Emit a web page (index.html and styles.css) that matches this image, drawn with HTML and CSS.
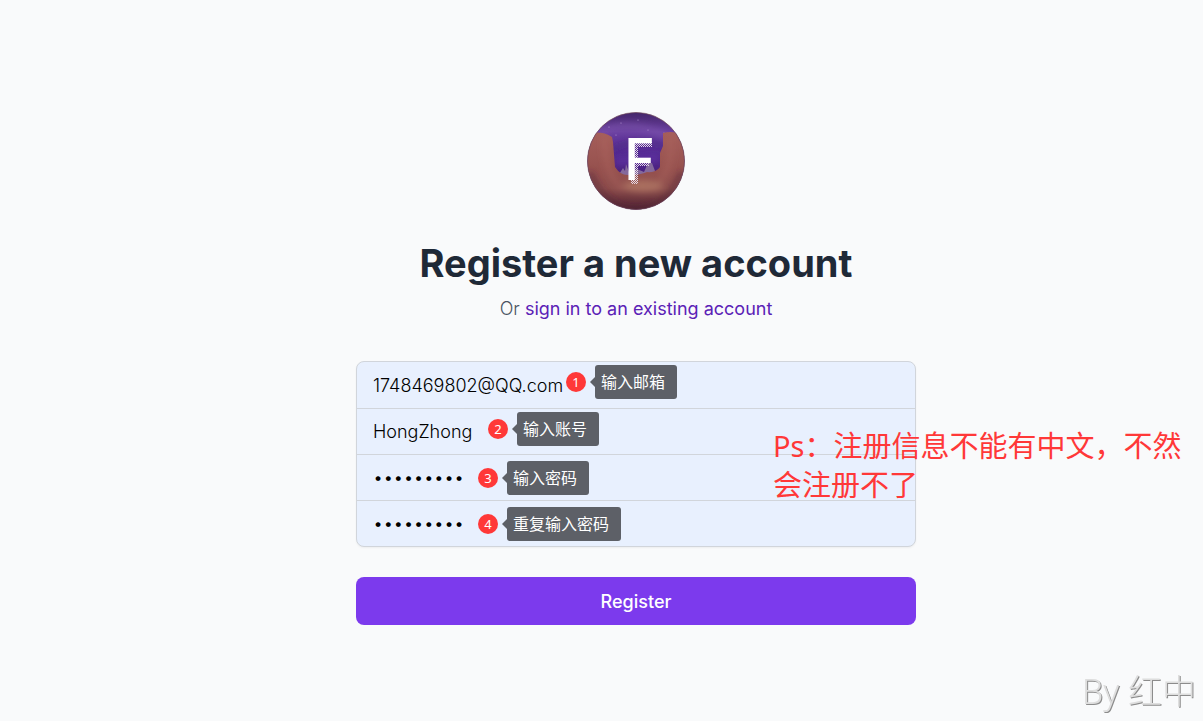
FILE: index.html
```html
<!DOCTYPE html>
<html lang="en">
<head>
    <meta charset="UTF-8" />
    <meta name="viewport" content="width=device-width, initial-scale=1.0" />
    <title>Register a new account</title>
    <link rel="stylesheet" href="styles.css">
</head>

<body>
    <main class="page">
        <div class="register">
            <svg class="logo" viewBox="0 0 98 98" role="img" aria-label="Logo">
                <defs>
                    <clipPath id="round"><circle cx="49" cy="49" r="48.5" /></clipPath>
                    <linearGradient id="sky" x1="0" y1="0" x2="0" y2="1">
                        <stop offset="0" stop-color="#432568" />
                        <stop offset="0.2" stop-color="#6a3fa0" />
                        <stop offset="0.42" stop-color="#532a92" />
                        <stop offset="0.6" stop-color="#4a2280" />
                    </linearGradient>
                    <linearGradient id="rock" x1="0" y1="0" x2="0" y2="1">
                        <stop offset="0" stop-color="#a55e5a" />
                        <stop offset="0.45" stop-color="#97524f" />
                        <stop offset="0.72" stop-color="#8d4d4c" />
                        <stop offset="1" stop-color="#4c2030" />
                    </linearGradient>
                    <pattern id="dots" width="2" height="2" patternUnits="userSpaceOnUse">
                        <rect width="1" height="1" fill="#e4d8e8" />
                        <rect x="1" y="1" width="1" height="1" fill="#e4d8e8" />
                    </pattern>
                    <filter id="soft" x="-50%" y="-50%" width="200%" height="200%"><feGaussianBlur stdDeviation="3" /></filter>
                </defs>
                <g clip-path="url(#round)">
                    <rect width="98" height="98" fill="url(#sky)" />
                    <g filter="url(#soft)">
                        <path d="M8 22 Q40 6 80 24" stroke="#8058b0" stroke-width="6" fill="none" opacity="0.6" />
                        <path d="M24 38 Q50 24 78 34" stroke="#3c1d72" stroke-width="4" fill="none" opacity="0.5" />
                        <path d="M28 50 L72 46" stroke="#6a37b2" stroke-width="7" opacity="0.5" />
                    </g>
                    <g fill="#b595d4">
                        <circle cx="22" cy="15" r="0.6" /><circle cx="34" cy="11" r="0.6" />
                        <circle cx="29" cy="23" r="0.6" /><circle cx="61" cy="18" r="0.6" />
                        <circle cx="77" cy="21" r="0.6" /><circle cx="51" cy="8" r="0.6" />
                    </g>
                    <path d="M31 64 L36 56 L38 59 L39 52 L42 60 L50 57 L57 60 L61 51 L65 51 L68 59 L68 66 L31 66 Z" fill="#84699c" />
                    <path d="M0 22 Q14 18 25 25 L26 30 L28 55 Q34 64 42 63 Q54 63 60 60 Q69 61 73 55 L73 41 L76 34 L76 21 Q87 18 98 24 V98 H0 Z" fill="url(#rock)" />
                    <g filter="url(#soft)" fill="none">
                        <ellipse cx="56" cy="74" rx="20" ry="6" fill="#bd856d" opacity="0.6" />
                        <path d="M18 24 Q16 60 36 78" stroke="#b36b63" stroke-width="5" opacity="0.4" />
                        <path d="M84 24 Q86 55 72 70" stroke="#b0695f" stroke-width="6" opacity="0.4" />
                        <path d="M3 60 Q18 98 49 98 Q80 98 95 60" stroke="#552436" stroke-width="6" opacity="0.6" />
                    </g>
                </g>
                <circle cx="49" cy="49" r="48.5" fill="none" stroke="#6e4657" stroke-width="1" opacity="0.7" />
                <!-- dotted shade to the right of and below the letter -->
                <g fill="url(#dots)">
                    <rect x="47" y="29" width="18" height="6" />
                    <rect x="47" y="48" width="15" height="6" />
                    <rect x="44" y="31" width="7" height="41" />
                </g>
                <text class="logo-letter" x="36" y="68">F</text>
            </svg>

            <h1>Register a new account</h1>
            <p class="subtitle">Or <a href="#">sign in to an existing account</a></p>

            <form class="register-form">
                <div class="fields">
                    <div class="field">
                        <input type="email" value="1748469802@QQ.com" aria-label="Email" />
                        <div class="hint hint-email"><span class="badge">1</span><span class="tip">输入邮箱</span></div>
                    </div>
                    <div class="field">
                        <input type="text" value="HongZhong" aria-label="Username" />
                        <div class="hint hint-user"><span class="badge">2</span><span class="tip">输入账号</span></div>
                    </div>
                    <div class="field">
                        <input type="password" value="hongzhong" aria-label="Password" />
                        <div class="hint hint-password"><span class="badge">3</span><span class="tip">输入密码</span></div>
                    </div>
                    <div class="field">
                        <input type="password" value="hongzhong" aria-label="Confirm password" />
                        <div class="hint hint-password"><span class="badge">4</span><span class="tip">重复输入密码</span></div>
                    </div>
                    <p class="note">Ps：注册信息不能有中文，不然会注册不了</p>
                </div>
                <button type="submit">Register</button>
            </form>
        </div>
    </main>

    <div class="watermark">By 红中</div>
</body>
</html>
```

FILE: styles.css
```css
* {
    box-sizing: border-box;
}

body {
    margin: 0;
    font-family: Inter, "Noto Sans CJK SC", sans-serif;
    font-size: 18px;
    background: #f9fafb;
    color: #4b5563;
    overflow-x: hidden;
}

.page {
    display: flex;
    align-items: center;
    justify-content: center;
    min-height: 100vh;
    padding: 16px 0 0 69px;
}

.register {
    display: flex;
    flex-direction: column;
    align-items: center;
    width: 100%;
    max-width: 560px;
}

.logo {
    width: 98px;
    height: 98px;
}

.logo-letter {
    font-family: "Noto Sans", sans-serif;
    font-size: 58px;
    font-weight: 500;
    fill: #ffffff;
}

h1 {
    margin: 30px 0 0;
    font-size: 38px;
    line-height: 46px;
    font-weight: 700;
    color: #1f2937;
    white-space: nowrap;
}

.subtitle {
    margin: 10px 0 0;
    line-height: 26px;
    font-weight: 300;
}

.subtitle a {
    color: #5b21b6;
    font-weight: 400;
    text-decoration: none;
}

.register-form {
    width: 100%;
    margin-top: 39px;
}

.fields {
    position: relative;
    border: 1px solid #d1d5db;
    border-radius: 8px;
    background: #e8f0fe;
    box-shadow: 0 1px 2px rgba(0, 0, 0, 0.05);
}

.field {
    position: relative;
    height: 46px;
}

.field + .field {
    border-top: 1px solid #d1d5db;
}

.field input {
    display: block;
    width: 100%;
    height: 100%;
    padding: 0 16px;
    border: none;
    outline: none;
    background: transparent;
    color: #000;
    font: inherit;
    font-weight: 300;
}

/* numbered callouts over the fields */
.hint {
    position: absolute;
    top: 3px;
    display: flex;
    align-items: center;
    gap: 9px;
}

.hint-email {
    left: 209px;
}

.hint-user {
    left: 131px;
}

.hint-password {
    top: 6px;
    left: 121px;
}

.badge {
    width: 20px;
    height: 20px;
    border-radius: 50%;
    background: #ff3838;
    color: #fff;
    font-family: "Noto Sans", sans-serif;
    font-size: 13px;
    line-height: 20px;
    text-align: center;
}

.tip {
    position: relative;
    padding: 0 12px 0 6px;
    border-radius: 3px;
    background: #5d6067;
    color: #fff;
    font-size: 16px;
    line-height: 34px;
    white-space: nowrap;
}

.tip::before {
    content: "";
    position: absolute;
    top: 12px;
    left: -5px;
    border: 5px solid transparent;
    border-left: none;
    border-right-color: #5d6067;
}

.note {
    position: absolute;
    top: 64px;
    left: 416px;
    width: 420px;
    margin: 0;
    color: #ff3838;
    font-family: "Noto Sans", "Noto Sans CJK SC", sans-serif;
    font-size: 29px;
    line-height: 39px;
}

button {
    display: block;
    width: 100%;
    height: 48px;
    margin-top: 30px;
    border: none;
    border-radius: 8px;
    background: #7c3aed;
    color: #fff;
    font: inherit;
    font-weight: 500;
    cursor: pointer;
}

.watermark {
    position: fixed;
    right: 7px;
    bottom: 6px;
    color: #dedede;
    font-family: "Noto Sans", "Noto Sans CJK SC", sans-serif;
    font-size: 34px;
    font-weight: 300;
    line-height: 48px;
    text-shadow: 1px 1px 0 #8c8c8c;
}
```
